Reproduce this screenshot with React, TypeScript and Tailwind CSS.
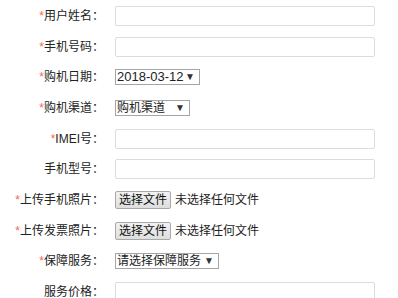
const Req = () => <span className="text-[#f26b4f]">*</span>;

const Label = ({ req, text }: { req?: boolean; text: string }) => (
  <div className="w-[104px] shrink-0 text-right text-[12px] leading-[16px] text-[#222]">
    {req && <Req />}
    {text}：
  </div>
);

const TextBox = () => (
  <input
    type="text"
    className="h-[20px] w-[260px] rounded-[2px] border border-[#dcdcdc] bg-white px-1 text-[12px] outline-none"
  />
);

const FakeSelect = ({ value, width, size }: { value: string; width: string; size: string }) => (
  <div
    className={`flex h-[16px] items-center justify-between border border-[#a5a5a5] bg-white pl-[1px] pr-[4px] text-[#222] ${width} ${size}`}
  >
    <span className="leading-[14px]">{value}</span>
    <span className="text-[10px] leading-none text-[#333]">▼</span>
  </div>
);

const FilePick = () => (
  <div className="flex items-center gap-[4px] text-[12px] text-[#222]">
    <button className="h-[18px] w-[56px] rounded-[2px] border border-[#a9a9a9] bg-gradient-to-b from-[#f2f2f2] to-[#dedede] text-[12px] leading-[16px] text-[#111]">
      选择文件
    </button>
    <span>未选择任何文件</span>
  </div>
);

const rows = [
  { h: "h-[31px]", req: true, text: "用户姓名", el: <TextBox /> },
  { h: "h-[31px]", req: true, text: "手机号码", el: <TextBox /> },
  { h: "h-[30px]", req: true, text: "购机日期", el: <FakeSelect value="2018-03-12" width="w-[85px]" size="text-[13px]" /> },
  { h: "h-[31px]", req: true, text: "购机渠道", el: <FakeSelect value="购机渠道" width="w-[75px]" size="text-[12px]" /> },
  { h: "h-[31px]", req: true, text: "IMEI号", el: <TextBox /> },
  { h: "h-[30px]", req: false, text: "手机型号", el: <TextBox /> },
  { h: "h-[31px]", req: true, text: "上传手机照片", el: <FilePick /> },
  { h: "h-[31px]", req: true, text: "上传发票照片", el: <FilePick /> },
  { h: "h-[30px]", req: true, text: "保障服务", el: <FakeSelect value="请选择保障服务" width="w-[104px]" size="text-[12px]" /> },
  { h: "h-[31px]", req: false, text: "服务价格", el: <TextBox /> },
];

export default function App() {
  return (
    <div className="h-[298px] w-[398px] overflow-hidden bg-white font-['Liberation_Sans','Noto_Sans_CJK_SC',sans-serif]">
      {rows.map((r, i) => (
        <div key={i} className={`flex items-center gap-[11px] ${r.h}`}>
          <Label req={r.req} text={r.text} />
          {r.el}
        </div>
      ))}
    </div>
  );
}
